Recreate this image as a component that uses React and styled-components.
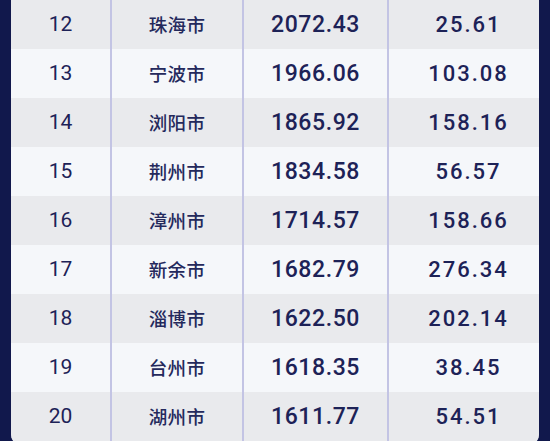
import React from "react";
import styled, { createGlobalStyle } from "styled-components";

const Global = createGlobalStyle`
  html, body {
    margin: 0;
    padding: 0;
    overflow: hidden;
    background: #11184c;
  }
  #root { height: 441px; }
`;

const Frame = styled.div`
  padding: 0 11px;
  height: 441px;
  box-sizing: border-box;
  background: #11184c;
`;

const Card = styled.div`
  width: 528px;
  border-radius: 0 0 12px 12px;
  overflow: hidden;
  padding-bottom: 5px;
  background: #e9eaed;
`;

const Row = styled.div`
  display: grid;
  grid-template-columns: 99px 132px 145px 152px;
  height: 49px;
  background: ${(p) => (p.$light ? "#f5f7fa" : "#e9eaed")};
`;

const Cell = styled.div`
  display: flex;
  align-items: center;
  justify-content: center;
  box-sizing: border-box;
  border-left: ${(p) => (p.$sep ? "2px solid #c3c4e4" : "none")};
  padding-left: ${(p) => p.$pl || 0}px;
  padding-bottom: 1px;
  color: #1d2257;
  font-family: Roboto, "Liberation Sans", Arial, sans-serif;
`;

const Rank = styled(Cell)`
  font-size: 21px;
  font-weight: 400;
`;

const City = styled(Cell)`
  font-family: "Noto Sans CJK SC", "Noto Sans", sans-serif;
  font-size: 18.5px;
  font-weight: 500;
  letter-spacing: 0.3px;
  color: #24295c;
`;

const Total = styled(Cell)`
  font-size: 23px;
  font-weight: 500;
  letter-spacing: 0.6px;
`;

const Growth = styled(Cell)`
  font-size: 22px;
  font-weight: 500;
  letter-spacing: 2px;
`;

const data = [
  [12, "珠海市", "2072.43", "25.61"],
  [13, "宁波市", "1966.06", "103.08"],
  [14, "浏阳市", "1865.92", "158.16"],
  [15, "荆州市", "1834.58", "56.57"],
  [16, "漳州市", "1714.57", "158.66"],
  [17, "新余市", "1682.79", "276.34"],
  [18, "淄博市", "1622.50", "202.14"],
  [19, "台州市", "1618.35", "38.45"],
  [20, "湖州市", "1611.77", "54.51"],
];

export default function App() {
  return (
    <>
      <Global />
      <Frame>
        <Card>
          {data.map(([rank, city, total, growth], i) => (
            <Row key={rank} $light={i % 2 === 1}>
              <Rank>{rank}</Rank>
              <City $sep>{city}</City>
              <Total $sep>{total}</Total>
              <Growth $sep $pl={9}>{growth}</Growth>
            </Row>
          ))}
        </Card>
      </Frame>
    </>
  );
}
